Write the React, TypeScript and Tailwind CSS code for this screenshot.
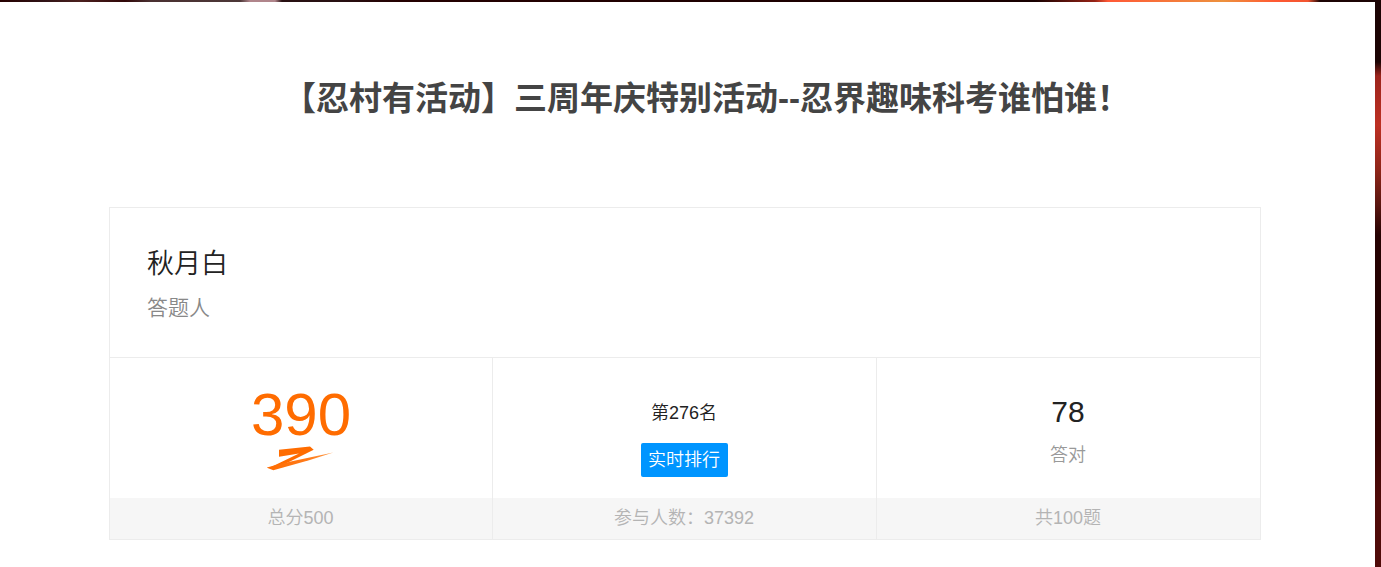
import type { ReactNode } from "react";

type StatProps = {
    footer: string;
    className?: string;
    children: ReactNode;
};

function Stat({ footer, className = "", children }: StatProps) {
    return (
        <div className={`flex flex-col border-[#ececec] ${className}`}>
            <div className="flex h-[140px] flex-col items-center">{children}</div>
            <div className="h-[41px] bg-[#f6f6f6] pr-px text-center text-lg leading-[40px] text-[#b4b4b4]">
                {footer}
            </div>
        </div>
    );
}

function ScoreMark() {
    return (
        <svg width="68" height="26" viewBox="0 0 68 26" className="mt-px">
            <defs>
                <linearGradient id="stroke" x1="0" x2="1">
                    <stop offset="0" stopColor="#ff6c00" />
                    <stop offset="0.6" stopColor="#ff7a1a" />
                    <stop offset="1" stopColor="#ff9a45" />
                </linearGradient>
            </defs>
            <path d="M12 3.8 43 .6 46.7 3.7 21 16.5 7 21.5 3 21.5 32 7.4 12 10.7Z" fill="#ff6c00" />
            <path d="M-.3 21.5 9 19 26 15 66.3 6.6 42 14.2 6.3 24.3Z" fill="url(#stroke)" />
        </svg>
    );
}

export default function App() {
    return (
        <div className="h-[567px] w-full overflow-hidden bg-[linear-gradient(to_bottom,#1c0404_0px,#1c0404_62px,#9c241c_76px,#bd3023_125px,#8e2519_170px,#5a1610_205px,#260202_235px,#240202_330px,#370403_440px,#4f0b09_500px,#500b09_567px)] font-['Liberation_Sans','Noto_Sans_CJK_SC',sans-serif]">
            <div className="h-0.5 bg-[linear-gradient(to_right,#260000_0px,#301316_45px,#4b201e_80px,#300708_125px,#4a3031_150px,#4c3737_240px,#b0858b_250px,#b0858b_275px,#281012_282px,#281012_340px,#240000_400px,#180000_1035px,#972316_1095px,#ff5936_1108px,#ed913e_1223px,#ff5932_1275px,#f25530_1308px,#1c0404_1320px,#1c0404_1381px)]" />
            <div className="mr-1.5 h-[565px] bg-white">
                <h1 className="pt-[72px] pl-[283px] text-[33px] leading-[50px] font-bold whitespace-nowrap text-[#444]">
                    【忍村有活动】三周年庆特别活动--忍界趣味科考谁怕谁！
                </h1>

                <div className="mt-[83px] ml-[109px] h-[333px] w-[1152px] border border-[#ececec] font-[350]">
                    <div className="h-[150px] border-b border-[#ececec] px-[37px] pt-[36px]">
                        <p className="text-[27px] leading-10 text-[#222]">秋月白</p>
                        <p className="mt-2 text-[21px] leading-8 text-[#888]">答题人</p>
                    </div>
                    <div className="grid grid-cols-[383px_384px_383px]">
                        <Stat footer="总分500" className="border-r">
                            <span className="mt-[27px] text-[60px] leading-[60px] text-[#ff6c00]">390</span>
                            <ScoreMark />
                        </Stat>
                        <Stat footer="参与人数：37392" className="border-r">
                            <p className="mt-[40px] pr-px text-lg leading-[30px] text-[#222]">第276名</p>
                            <button className="mt-[15px] h-[34px] w-[87px] rounded-xs bg-[#0095ff] pr-px text-lg leading-[34px] text-white">
                                实时排行
                            </button>
                        </Stat>
                        <Stat footer="共100题">
                            <p className="mt-[34px] pr-px text-[30px] leading-10 text-[#222]">78</p>
                            <p className="mt-2 pr-px text-lg leading-[30px] text-[#999]">答对</p>
                        </Stat>
                    </div>
                </div>
            </div>
        </div>
    );
}
